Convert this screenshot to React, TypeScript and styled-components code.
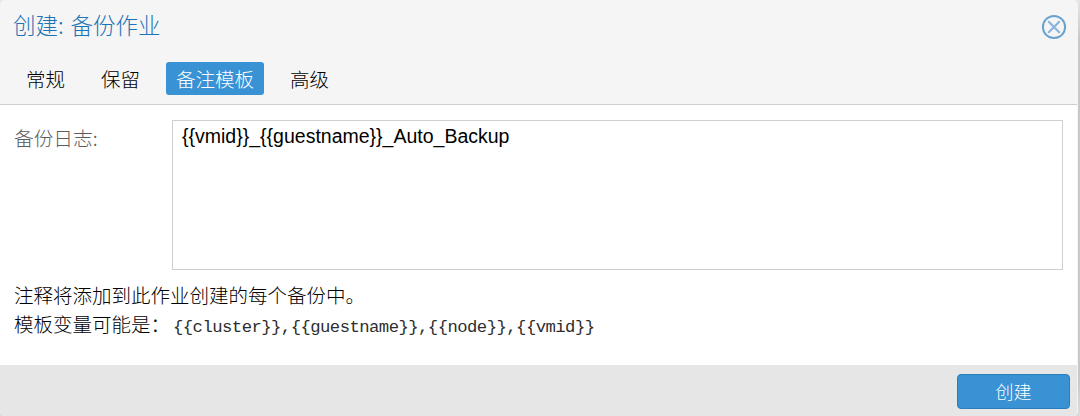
import React from "react";
import styled, { createGlobalStyle } from "styled-components";

const GlobalStyle = createGlobalStyle`
  html, body { margin: 0; padding: 0; }
  * { box-sizing: border-box; }
`;

const cjk = '"Noto Sans CJK SC", sans-serif';

const Backdrop = styled.div`
  height: 416px;
  background: linear-gradient(#e6e6e6, #c8c8c8 40px, #c8c8c8 380px, #dcdcdc);
`;

const Dialog = styled.div`
  width: 1078px;
  height: 416px;
  display: flex;
  flex-direction: column;
  background: #f5f5f5;
  border-right: 1px solid #f5f5f5;
  border-radius: 5px;
  overflow: hidden;
  font-family: ${cjk};
  font-weight: 300;
  font-size: 19.5px;
  color: #000;
  white-space: nowrap;
`;

const Header = styled.header`
  height: 53px;
  flex: none;
  display: flex;
  justify-content: space-between;
  align-items: center;
  padding: 0 10px 0 13px;
`;

const Title = styled.h1`
  margin: 0;
  padding-bottom: 5px;
  font-size: 22.5px;
  line-height: 32px;
  font-weight: 300;
  word-spacing: 2px;
  color: #1c74b6;
`;

const CloseButton = styled.button`
  width: 26px;
  height: 26px;
  padding: 0;
  border: 0;
  background: none;
  display: flex;
`;

const TabBar = styled.nav`
  height: 52px;
  flex: none;
  display: flex;
  align-items: flex-start;
  gap: 16px;
  padding: 9px 16px 0;
  border-bottom: 1px solid #cfcfcf;
`;

const Tab = styled.button<{ $active?: boolean }>`
  height: 33px;
  padding: 0 10px;
  border: 0;
  border-radius: 3px;
  font: inherit;
  line-height: 33px;
  color: ${(p) => (p.$active ? "#fff" : "#000")};
  background: ${(p) => (p.$active ? "#3892d4" : "transparent")};
`;

const Body = styled.main`
  height: 260px;
  flex: none;
  padding: 15px 14px 0;
  background: #fff;
`;

const Field = styled.div`
  display: flex;
`;

const Label = styled.label`
  width: 158px;
  flex: none;
  padding-top: 3px;
  line-height: 30px;
  font-size: 19.7px;
  color: #5c5c5c;
`;

const TextArea = styled.textarea`
  width: 891px;
  height: 150px;
  flex: none;
  padding: 4px 9px;
  border: 1px solid #cfcfcf;
  outline: 0;
  resize: none;
  font-family: "Liberation Sans", Arial, sans-serif;
  font-size: 19.5px;
  line-height: 23px;
  color: #000;
`;

const Hint = styled.p`
  margin: 10px 0 0;
  line-height: 29px;
`;

const Code = styled.code`
  margin-left: 3px;
  font-family: "Liberation Mono", monospace;
  font-weight: 400;
  font-size: 17.25px;
  letter-spacing: -0.55px;
  line-height: 1;
  color: #2e2e2e;
`;

const Footer = styled.footer`
  flex: 1;
  display: flex;
  justify-content: flex-end;
  align-items: flex-start;
  padding: 9px 7px 0;
  background: #e6e6e6;
`;

const Submit = styled.button`
  width: 113px;
  height: 35px;
  padding: 0;
  border: 1px solid #2b7dbb;
  border-radius: 4px;
  background: #3892d4;
  color: #fff;
  font: inherit;
  font-size: 18px;
  line-height: 33px;
`;

const tabs = ["常规", "保留", "备注模板", "高级"];

export default function App() {
  return (
    <>
      <GlobalStyle />
      <Backdrop>
        <Dialog>
          <Header>
            <Title>创建: 备份作业</Title>
            <CloseButton aria-label="关闭">
              <svg width="26" height="26" viewBox="0 0 26 26" fill="none">
                <circle cx="13" cy="13" r="11.1" stroke="#69a2cf" strokeWidth="2" />
                <path d="M7.8 7.8l10.4 10.4M18.2 7.8L7.8 18.2" stroke="#8ab5dc" strokeWidth="2.2" strokeLinecap="round" />
              </svg>
            </CloseButton>
          </Header>
          <TabBar>
            {tabs.map((t) => (
              <Tab key={t} $active={t === "备注模板"}>{t}</Tab>
            ))}
          </TabBar>
          <Body>
            <Field>
              <Label htmlFor="notes">备份日志:</Label>
              <TextArea id="notes" defaultValue="{{vmid}}_{{guestname}}_Auto_Backup" spellCheck={false} />
            </Field>
            <Hint>
              注释将添加到此作业创建的每个备份中。
              <br />
              模板变量可能是：<Code>{"{{cluster}},{{guestname}},{{node}},{{vmid}}"}</Code>
            </Hint>
          </Body>
          <Footer>
            <Submit>创建</Submit>
          </Footer>
        </Dialog>
      </Backdrop>
    </>
  );
}
